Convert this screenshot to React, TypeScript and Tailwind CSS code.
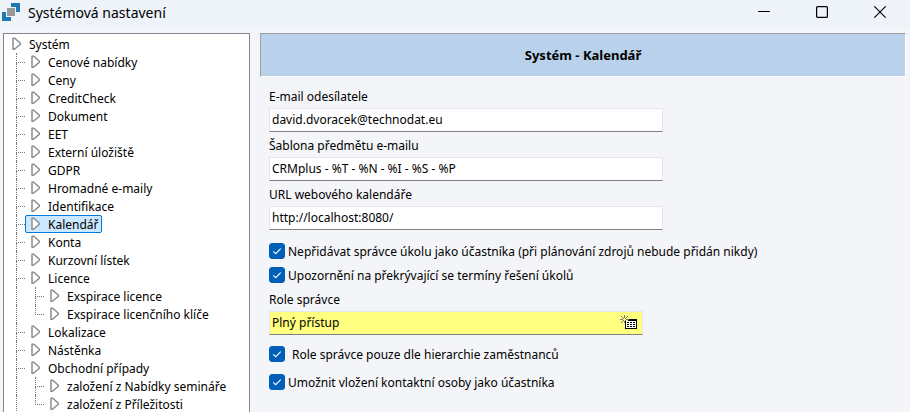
import { useState } from 'react'

interface TreeNode {
  label: string
  children?: TreeNode[]
}

const NODES: TreeNode[] = [
  { label: 'Cenové nabídky' },
  { label: 'Ceny' },
  { label: 'CreditCheck' },
  { label: 'Dokument' },
  { label: 'EET' },
  { label: 'Externí úložiště' },
  { label: 'GDPR' },
  { label: 'Hromadné e-maily' },
  { label: 'Identifikace' },
  { label: 'Kalendář' },
  { label: 'Konta' },
  { label: 'Kurzovní lístek' },
  { label: 'Licence', children: [{ label: 'Exspirace licence' }, { label: 'Exspirace licenčního klíče' }] },
  { label: 'Lokalizace' },
  { label: 'Nástěnka' },
  {
    label: 'Obchodní případy',
    children: [{ label: 'založení z Nabídky semináře' }, { label: 'založení z Příležitosti' }],
  },
]

function AppLogo() {
  return (
    <svg className="w-[18px] h-[18px] shrink-0" viewBox="0 0 18 18" shapeRendering="crispEdges" aria-hidden="true">
      <path d="M9 0h9v9h-4V4H9z" fill="#1f78b4" />
      <path d="M0 9h4v5h5v4H0z" fill="#1f78b4" />
      <path d="M5 5h8v8H5z" fill="#999" />
    </svg>
  )
}

function NodeArrow() {
  return (
    <svg className="w-[10px] h-[14px] shrink-0" viewBox="0 0 10 14" fill="#fff" aria-hidden="true">
      <path d="M1 1.2v11.1h1.4L8.4 7.2v-.9L2.8 1.2z" stroke="#8c8c8c" strokeWidth="1.5" strokeLinejoin="round" />
    </svg>
  )
}

interface TreeRowProps {
  label: string
  depth: number
  isLast?: boolean
  selected: boolean
  onSelect: (label: string) => void
}

function TreeRow({ label, depth, isLast, selected, onSelect }: TreeRowProps) {
  return (
    <div className="flex h-[18px] pl-3">
      {depth === 2 && <span className="w-[19px] shrink-0 border-l border-dotted border-[#777]" />}
      {depth > 0 && (
        <span className="w-[9px] shrink-0 flex flex-col">
          <span className="h-[10px] border-l border-b border-dotted border-[#777]" />
          {!isLast && <span className="h-2 border-l border-dotted border-[#777]" />}
        </span>
      )}
      <button
        onClick={() => onSelect(label)}
        className={`flex items-center h-[18px] pr-[2px] whitespace-nowrap border rounded-xs ${depth > 0 ? 'pl-[5px] gap-[7px]' : '-ml-2 pl-[3px] gap-[7px]'} ${
          selected ? 'bg-[#cce8ff] border-[#0078d7]' : 'border-transparent'
        }`}
      >
        <NodeArrow />
        <span className="pt-[2px]">{label}</span>
      </button>
    </div>
  )
}

interface FieldProps {
  id: string
  label: string
  defaultValue: string
}

const inputClass =
  'block w-full h-6 px-[2px] pb-px bg-white border border-[#e6e7e9] border-b-[#7f8083] outline-none'

function TextField({ id, label, defaultValue }: FieldProps) {
  return (
    <div className="w-[394px] mb-[6px]">
      <label htmlFor={id} className="block mb-[3px]">
        {label}
      </label>
      <input id={id} type="text" defaultValue={defaultValue} className={inputClass} />
    </div>
  )
}

function CheckField({ label, wide }: { label: string; wide?: boolean }) {
  return (
    <label className={`flex items-center h-4 ${wide ? 'gap-[7px]' : 'gap-[3px]'}`}>
      <span className="grid w-4 h-4 shrink-0">
        <input
          type="checkbox"
          defaultChecked
          className="peer col-start-1 row-start-1 appearance-none w-4 h-4 rounded-[3px] border border-[#005fb8] checked:bg-[#005fb8]"
        />
        <svg
          className="col-start-1 row-start-1 w-4 h-4 pointer-events-none invisible peer-checked:visible"
          viewBox="0 0 16 16"
          fill="none"
          aria-hidden="true"
        >
          <path d="M4.2 8.3l2.5 2.4 5-5" stroke="#fff" strokeWidth="1.1" />
        </svg>
      </span>
      <span className="pt-[2px]">{label}</span>
    </label>
  )
}

function PickerIcon() {
  return (
    <svg className="w-[17px] h-4" viewBox="0 0 17 16" shapeRendering="crispEdges" aria-hidden="true">
      <path d="M5 4h12v10H5z" fill="#000" />
      <path d="M6 6h10v7H6z" fill="#fff" />
      <path
        d="M7 7h2v1H7zM10 7h2v1h-2zM13 7h2v1h-2zM7 9h2v1H7zM10 9h2v1h-2zM13 9h2v1h-2zM7 11h2v1H7zM10 11h2v1h-2zM13 11h2v1h-2z"
        fill="#000"
      />
      <path d="M3 3h5v3H3z" fill="#ffff80" />
      <path
        d="M4 0h1v3H4zM1 1h1v1H1zM2 2h1v1H2zM7 1h1v1H7zM6 2h1v1H6zM0 4h3v1H0zM6 4h3v1H6zM3 3h1v1H3zM5 3h1v1H5zM3 5h1v1H3zM5 5h1v1H5zM2 6h1v1H2zM1 7h1v1H1zM4 6h1v2H4z"
        fill="#77777d"
      />
    </svg>
  )
}

export default function App() {
  const [selected, setSelected] = useState('Kalendář')

  return (
    <div className="flex flex-col h-screen overflow-hidden bg-[#f4f5f8] text-black text-[12px] leading-4 font-['Noto_Sans',sans-serif]">
      <header className="flex items-center justify-between h-7 shrink-0 bg-[#eef3fa] pl-[2px] pb-1">
        <div className="flex items-center gap-2">
          <AppLogo />
          <h1 className="text-[14px] pt-px">Systémová nastavení</h1>
        </div>
        <div className="flex items-center gap-[46px] pr-6">
          <button aria-label="Minimalizovat">
            <svg className="w-3 h-3" viewBox="0 0 12 12" fill="none" stroke="#000" aria-hidden="true">
              <path d="M0 5.5h12" />
            </svg>
          </button>
          <button aria-label="Maximalizovat">
            <svg className="w-3 h-3" viewBox="0 0 12 12" fill="none" stroke="#000" aria-hidden="true">
              <rect x=".6" y=".6" width="10.8" height="10.8" rx="1" strokeWidth="1.2" />
            </svg>
          </button>
          <button aria-label="Zavřít">
            <svg className="w-3 h-3" viewBox="0 0 12 12" fill="none" stroke="#000" aria-hidden="true">
              <path d="M.3.3l11.4 11.4M11.7.3L.3 11.7" strokeWidth="1.1" />
            </svg>
          </button>
        </div>
      </header>

      <div className="flex flex-1 min-h-0 pt-[5px] pl-[3px] pr-1 gap-[10px]">
        <nav className="w-[247px] shrink-0 overflow-hidden bg-white border border-b-0 border-[#828790] pt-px">
          <TreeRow label="Systém" depth={0} selected={selected === 'Systém'} onSelect={setSelected} />
          {NODES.map((node) => (
            <div key={node.label}>
              <TreeRow label={node.label} depth={1} selected={selected === node.label} onSelect={setSelected} />
              {node.children?.map((child, i) => (
                <TreeRow
                  key={child.label}
                  label={child.label}
                  depth={2}
                  isLast={i === node.children!.length - 1}
                  selected={selected === child.label}
                  onSelect={setSelected}
                />
              ))}
            </div>
          ))}
        </nav>

        <main className="flex-1 min-w-0">
          <h2 className="flex items-center justify-center h-11 bg-[#b9d1ea] border border-t-[#a0a0a0] border-l-[#a0a0a0] border-r-white border-b-white text-[13px] font-bold">
            Systém - Kalendář
          </h2>
          <form className="pl-[9px] pt-3">
            <TextField id="sender" label="E-mail odesílatele" defaultValue="david.dvoracek@technodat.eu" />
            <TextField id="subject" label="Šablona předmětu e-mailu" defaultValue="CRMplus - %T - %N - %I - %S - %P" />
            <TextField id="url" label="URL webového kalendáře" defaultValue="http://localhost:8080/" />

            <div className="flex flex-col gap-2 pt-[7px]">
              <CheckField label="Nepřidávat správce úkolu jako účastníka (při plánování zdrojů nebude přidán nikdy)" />
              <CheckField label="Upozornění na překrývající se termíny řešení úkolů" />
            </div>

            <label htmlFor="role" className="block mt-[9px] mb-[3px]">
              Role správce
            </label>
            <div className="flex items-center w-[374px] h-6 pr-[5px] bg-[#ffff80] border border-[#e6e7e9] border-b-[#7f8083]">
              <input
                id="role"
                type="text"
                defaultValue="Plný přístup"
                className="flex-1 min-w-0 px-[2px] bg-transparent outline-none"
              />
              <button type="button" aria-label="Vybrat roli">
                <PickerIcon />
              </button>
            </div>

            <div className="flex flex-col gap-3 pt-[11px]">
              <CheckField label="Role správce pouze dle hierarchie zaměstnanců" wide />
              <CheckField label="Umožnit vložení kontaktní osoby jako účastníka" />
            </div>
          </form>
        </main>
      </div>
    </div>
  )
}
